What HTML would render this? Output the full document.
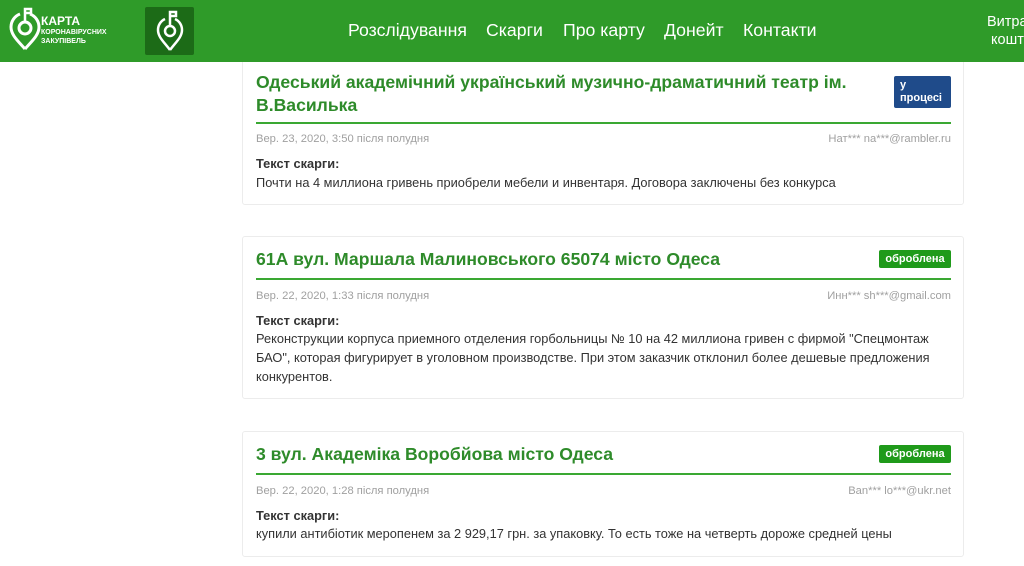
<!DOCTYPE html>
<html><head><meta charset="utf-8"><style>
*{margin:0;padding:0;box-sizing:border-box}
body{width:1024px;height:566px;overflow:hidden;background:#fff;font-family:"Liberation Sans",Arial,sans-serif;position:relative}
.hdr{position:absolute;left:0;top:0;width:1024px;height:62px;background:#2f9b29}
.nav{position:absolute;top:20px;color:#fff;font-size:17.7px}
.card{position:absolute;left:242px;width:722px;border:1px solid #ececec;border-radius:3px;background:#fff}
.t{position:absolute;left:256px;color:#2e8b2a;font-weight:bold;font-size:17.6px;line-height:23px}
.ln{position:absolute;left:256px;width:695px;height:2px;background:#3aa832}
.d{position:absolute;left:256px;font-size:11.2px;color:#a0a0a0}
.e{position:absolute;right:73px;font-size:11.2px;color:#a0a0a0;text-align:right}
.k{position:absolute;left:256px;font-size:12.8px;font-weight:bold;color:#333}
.x{position:absolute;left:256px;width:690px;font-size:12.8px;color:#333;line-height:19px}
.b{position:absolute;color:#fff;font-weight:bold;font-size:11px;border-radius:2px}
</style></head><body>
<div class="card" style="top:40px;height:165px"></div>
<div class="card" style="top:236px;height:163px"></div>
<div class="card" style="top:431px;height:126px"></div>
<div class="hdr"></div>
<svg style="position:absolute;left:8px;top:7px" width="34" height="45" viewBox="0 0 34 45"><path d="M17 42 C10 34 3 28 3 20 A14 14 0 0 1 12 7" fill="none" stroke="#fff" stroke-width="3"/><path d="M17 42 C24 34 31 28 31 20 A14 14 0 0 0 22 7" fill="none" stroke="#fff" stroke-width="3"/><circle cx="17" cy="21" r="6" fill="none" stroke="#fff" stroke-width="3"/><path d="M17 15V2h6v4h-6" fill="none" stroke="#fff" stroke-width="2.5"/></svg>
<div style="position:absolute;left:41px;top:15px;color:#fff;font-weight:bold;font-size:12px;line-height:12px">КАРТА</div>
<div style="position:absolute;left:41px;top:28px;color:#fff;font-weight:bold;font-size:7px;line-height:9px">КОРОНАВІРУСНИХ<br>ЗАКУПІВЕЛЬ</div>
<div style="position:absolute;left:145px;top:7px;width:49px;height:48px;background:#1c6b17;border-radius:2px"></div>
<svg style="position:absolute;left:155px;top:10px" width="30" height="42" viewBox="0 0 30 42"><path d="M15 40 C9 32 3 27 3 20 A12 12 0 0 1 10 9" fill="none" stroke="#fff" stroke-width="2.5"/><path d="M15 40 C21 32 27 27 27 20 A12 12 0 0 0 20 9" fill="none" stroke="#fff" stroke-width="2.5"/><circle cx="15" cy="21" r="5" fill="none" stroke="#fff" stroke-width="2.5"/><path d="M15 16V2h6v4h-6" fill="none" stroke="#fff" stroke-width="2.5"/></svg>
<div class="nav" style="left:348px">Розслідування</div>
<div class="nav" style="left:486px">Скарги</div>
<div class="nav" style="left:563px">Про карту</div>
<div class="nav" style="left:664px">Донейт</div>
<div class="nav" style="left:743px">Контакти</div>
<div style="position:absolute;left:987px;top:13px;color:#fff;font-size:14.5px;line-height:18px;white-space:nowrap">Витра<br>&nbsp;коштi</div>

<div class="t" style="top:71px">Одеський академічний український музично-драматичний театр ім.<br>В.Василька</div>
<div class="b" style="left:894px;top:76px;width:57px;height:32px;background:#1f4b8a;padding:3px 6px;line-height:13px">у<br>процесі</div>
<div class="ln" style="top:122px"></div>
<div class="d" style="top:133px">Вер. 23, 2020, 3:50 після полудня</div>
<div class="e" style="top:133px">Нат*** na***@rambler.ru</div>
<div class="k" style="top:156px">Текст скарги:</div>
<div class="x" style="top:173px">Почти на 4 миллиона гривень приобрели мебели и инвентаря. Договора заключены без конкурса</div>

<div class="t" style="top:248px">61А вул. Маршала Малиновського 65074 місто Одеса</div>
<div class="b" style="left:879px;top:250px;width:72px;height:18px;background:#1f9a1a;line-height:18px;text-align:center">оброблена</div>
<div class="ln" style="top:278px"></div>
<div class="d" style="top:290px">Вер. 22, 2020, 1:33 після полудня</div>
<div class="e" style="top:290px">Инн*** sh***@gmail.com</div>
<div class="k" style="top:313px">Текст скарги:</div>
<div class="x" style="top:329px">Реконструкции корпуса приемного отделения горбольницы № 10 на 42 миллиона гривен с фирмой "Спецмонтаж БАО", которая фигурирует в уголовном производстве. При этом заказчик отклонил более дешевые предложения конкурентов.</div>

<div class="t" style="top:443px">3 вул. Академіка Воробйова місто Одеса</div>
<div class="b" style="left:879px;top:445px;width:72px;height:18px;background:#1f9a1a;line-height:18px;text-align:center">оброблена</div>
<div class="ln" style="top:473px"></div>
<div class="d" style="top:485px">Вер. 22, 2020, 1:28 після полудня</div>
<div class="e" style="top:485px">Ban*** lo***@ukr.net</div>
<div class="k" style="top:508px">Текст скарги:</div>
<div class="x" style="top:524px">купили антибіотик меропенем за 2 929,17 грн. за упаковку. То есть тоже на четверть дороже средней цены</div>
</body></html>
